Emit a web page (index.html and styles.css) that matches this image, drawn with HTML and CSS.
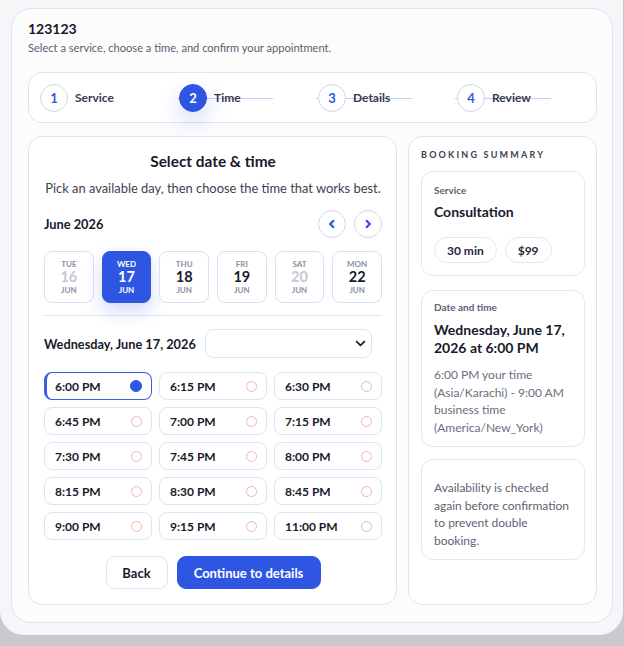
FILE: index.html
```html
<!DOCTYPE html>
<html lang="en">
<head>
<meta charset="utf-8">
<title>Booking</title>
<link rel="stylesheet" href="styles.css">
</head>
<body>
<div class="shell">
  <div class="card">
    <h1 class="title">123123</h1>
    <p class="subtitle">Select a service, choose a time, and confirm your appointment.</p>

    <div class="stepper">
      <div class="step"><span class="num">1</span><span class="label">Service</span></div>
      <div class="step line"><span class="num active">2</span><span class="label">Time</span></div>
      <div class="step line"><span class="num">3</span><span class="label">Details</span></div>
      <div class="step line"><span class="num">4</span><span class="label">Review</span></div>
    </div>

    <div class="panels">
      <section class="main">
        <h2 class="main-title">Select date &amp; time</h2>
        <p class="main-sub">Pick an available day, then choose the time that works best.</p>

        <div class="month-row">
          <span class="month">June 2026</span>
          <div class="navs">
            <button class="nav"><svg width="10" height="10" viewBox="0 0 10 10"><polyline points="6.2,2 3.2,5 6.2,8" fill="none" stroke="#2f56e3" stroke-width="2.4" stroke-linecap="round" stroke-linejoin="round"/></svg></button>
            <button class="nav"><svg width="10" height="10" viewBox="0 0 10 10"><polyline points="3.8,2 6.8,5 3.8,8" fill="none" stroke="#2f56e3" stroke-width="2.4" stroke-linecap="round" stroke-linejoin="round"/></svg></button>
          </div>
        </div>

        <div class="days">
          <div class="day off"><span class="dow">TUE</span><span class="dnum">16</span><span class="mon">JUN</span></div>
          <div class="day sel"><span class="dow">WED</span><span class="dnum">17</span><span class="mon">JUN</span></div>
          <div class="day"><span class="dow">THU</span><span class="dnum">18</span><span class="mon">JUN</span></div>
          <div class="day"><span class="dow">FRI</span><span class="dnum">19</span><span class="mon">JUN</span></div>
          <div class="day off"><span class="dow">SAT</span><span class="dnum">20</span><span class="mon">JUN</span></div>
          <div class="day"><span class="dow">MON</span><span class="dnum">22</span><span class="mon">JUN</span></div>
        </div>

        <div class="date-row">
          <span class="date-label">Wednesday, June 17, 2026</span>
          <div class="select"><svg width="11" height="11" viewBox="0 0 10 10"><polyline points="1.5,3.2 5,6.7 8.5,3.2" fill="none" stroke="#1c1f2e" stroke-width="1.6" stroke-linecap="round" stroke-linejoin="round"/></svg></div>
        </div>

        <div class="slots">
          <div class="slot sel"><span>6:00 PM</span><i class="radio"></i></div>
          <div class="slot"><span>6:15 PM</span><i class="radio"></i></div>
          <div class="slot"><span>6:30 PM</span><i class="radio"></i></div>
          <div class="slot"><span>6:45 PM</span><i class="radio"></i></div>
          <div class="slot"><span>7:00 PM</span><i class="radio"></i></div>
          <div class="slot"><span>7:15 PM</span><i class="radio"></i></div>
          <div class="slot"><span>7:30 PM</span><i class="radio"></i></div>
          <div class="slot"><span>7:45 PM</span><i class="radio"></i></div>
          <div class="slot"><span>8:00 PM</span><i class="radio"></i></div>
          <div class="slot"><span>8:15 PM</span><i class="radio"></i></div>
          <div class="slot"><span>8:30 PM</span><i class="radio"></i></div>
          <div class="slot"><span>8:45 PM</span><i class="radio"></i></div>
          <div class="slot"><span>9:00 PM</span><i class="radio"></i></div>
          <div class="slot"><span>9:15 PM</span><i class="radio"></i></div>
          <div class="slot"><span>11:00 PM</span><i class="radio"></i></div>
        </div>

        <div class="actions">
          <button class="btn back">Back</button>
          <button class="btn primary">Continue to details</button>
        </div>
      </section>

      <aside class="summary">
        <div class="sum-head">BOOKING SUMMARY</div>
        <div class="box">
          <div class="box-label">Service</div>
          <div class="box-value">Consultation</div>
          <div class="pills"><span class="pill">30 min</span><span class="pill">$99</span></div>
        </div>
        <div class="box when">
          <div class="box-label">Date and time</div>
          <div class="box-title">Wednesday, June 17, 2026 at 6:00 PM</div>
          <div class="box-text">6:00 PM your time (Asia/Karachi) - 9:00 AM business time (America/New_York)</div>
        </div>
        <div class="box note">
          <div class="box-text">Availability is checked again before confirmation to prevent double booking.</div>
        </div>
      </aside>
    </div>
  </div>
</div>
</body>
</html>
```

FILE: styles.css
```css
* { box-sizing: border-box; }
html, body { margin: 0; padding: 0; }
body {
  background: #c9cad0;
  font-family: "Lato", "Inter", sans-serif;
  color: #171a2b;
  width: 624px;
  height: 646px;
  overflow: hidden;
}
.shell {
  width: 623px;
  height: 635px;
  background: #f6f6f8;
  border-radius: 0 0 24px 24px;
  padding: 8px 10px 12px 11px;
}
.card {
  height: 100%;
  border: 1px solid #dfe3f6;
  border-radius: 20px;
  background: #fcfcfd;
  padding: 11px 15px 0 16px;
}
.title {
  margin: 0;
  font-size: 14px;
  line-height: 18px;
  font-weight: 700;
}
.subtitle {
  margin: 3px 0 0;
  font-size: 11.1px;
  line-height: 14px;
  color: #5a6072;
}
.stepper {
  margin-top: 17px;
  height: 51px;
  border: 1px solid #dfe3f6;
  border-radius: 14px;
  background: #fff;
  display: grid;
  grid-template-columns: repeat(4, 129px);
  column-gap: 10px;
  padding: 0 11px;
  align-items: center;
}
.step {
  position: relative;
  display: flex;
  align-items: center;
  gap: 7px;
}
.step.line::before {
  content: "";
  position: absolute;
  left: -2px;
  top: 50%;
  width: 96px;
  height: 1px;
  background: #c6cef1;
}
.num {
  position: relative;
  z-index: 1;
  width: 28px;
  height: 28px;
  border-radius: 50%;
  border: 1px solid #cdd5f4;
  background: #fff;
  color: #2f56e3;
  font-weight: 700;
  font-size: 13px;
  display: flex;
  align-items: center;
  justify-content: center;
}
.num.active {
  background: #2f56e3;
  border-color: #2f56e3;
  color: #fff;
  box-shadow: 0 10px 22px rgba(47, 86, 227, 0.22);
}
.label {
  position: relative;
  font-size: 12px;
  font-weight: 700;
  color: #363b50;
}
.panels {
  margin-top: 13px;
  display: flex;
  gap: 11px;
  align-items: flex-start;
}
.main {
  width: 369px;
  height: 469px;
  border: 1px solid #dfe3f6;
  border-radius: 14px;
  background: #fff;
  padding: 13px 14px 0 15px;
}
.main-title {
  margin: 0;
  text-align: center;
  font-size: 15.4px;
  line-height: 22px;
  font-weight: 700;
}
.main-sub {
  margin: 7px 0 0;
  text-align: center;
  font-size: 12.9px;
  line-height: 18px;
  color: #3c4152;
}
.month-row {
  margin-top: 13px;
  display: flex;
  align-items: center;
  justify-content: space-between;
}
.month { font-size: 12.8px; font-weight: 700; }
.navs { display: flex; gap: 8px; }
.nav {
  width: 28px;
  height: 28px;
  border-radius: 50%;
  border: 1px solid #cdd5f4;
  background: #fff;
  padding: 0;
  display: flex;
  align-items: center;
  justify-content: center;
}
.days {
  margin-top: 13px;
  display: grid;
  grid-template-columns: repeat(6, 1fr);
  gap: 8px;
  padding-bottom: 12px;
  border-bottom: 1px solid #e1e5f5;
}
.day {
  height: 52px;
  border: 1px solid #d9dff5;
  border-radius: 8px;
  display: flex;
  flex-direction: column;
  align-items: center;
  justify-content: center;
  background: #fff;
}
.dow, .mon {
  font-size: 8px;
  font-weight: 700;
  color: #8a90a6;
  line-height: 10px;
}
.dnum {
  font-size: 14.5px;
  font-weight: 700;
  line-height: 16px;
  color: #171a2b;
}
.day.off .dnum { color: #c4c8d4; }
.day.sel {
  background: #2f56e3;
  border-color: #2f56e3;
  box-shadow: 0 8px 18px rgba(47, 86, 227, 0.22);
}
.day.sel .dow, .day.sel .mon, .day.sel .dnum { color: #fff; }
.date-row {
  margin-top: 13px;
  display: flex;
  align-items: center;
  gap: 9px;
}
.date-label { font-size: 12.75px; font-weight: 700; }
.select {
  width: 167px;
  height: 29px;
  border: 1px solid #dfe3f6;
  border-radius: 8px;
  display: flex;
  align-items: center;
  justify-content: flex-end;
  padding-right: 5px;
}
.slots {
  margin-top: 14px;
  display: grid;
  grid-template-columns: repeat(3, 1fr);
  column-gap: 7px;
  row-gap: 7px;
}
.slot {
  height: 28px;
  border: 1px solid #dfe3f6;
  border-radius: 8px;
  display: flex;
  align-items: center;
  justify-content: space-between;
  padding: 0 9px 0 10px;
  font-size: 12px;
  font-weight: 700;
  color: #171a2b;
}
.radio {
  width: 11px;
  height: 11px;
  border-radius: 50%;
  border: 1px solid #f0b5b5;
}
.slot.sel {
  border-color: #3a5ee6;
  border-left: 3px solid #3a5ee6;
  padding-left: 8px;
}
.slot.sel .radio {
  width: 12px;
  height: 12px;
  background: #2f56e3;
  border-color: #2f56e3;
}
.actions {
  margin-top: 16px;
  display: flex;
  justify-content: center;
  gap: 9px;
}
.btn {
  height: 33px;
  border-radius: 9px;
  font-family: inherit;
  font-size: 13px;
  font-weight: 700;
}
.back {
  width: 62px;
  background: #fff;
  border: 1px solid #dfe3f6;
  color: #171a2b;
}
.primary {
  width: 144px;
  background: #2f56e3;
  border: 1px solid #2f56e3;
  color: #fff;
}
.summary {
  width: 189px;
  height: 469px;
  border: 1px solid #dfe3f6;
  border-radius: 14px;
  background: #fff;
  padding: 11px 11px 0 12px;
}
.sum-head {
  font-size: 9px;
  line-height: 14px;
  font-weight: 700;
  letter-spacing: 2.2px;
  color: #3a3f52;
}
.box {
  margin-top: 9px;
  border: 1px solid #e6e8f0;
  border-radius: 12px;
  padding: 11px 11px 12px 12px;
}
.box.when { margin-top: 14px; padding-top: 9px; padding-bottom: 10px; }
.box.note { margin-top: 12px; padding: 11px 11px 10px 12px; }
.box-label {
  font-size: 10px;
  line-height: 14px;
  font-weight: 700;
  color: #5b6175;
}
.box-value {
  margin-top: 6px;
  font-size: 14px;
  line-height: 18px;
  font-weight: 700;
}
.pills {
  margin-top: 16px;
  display: flex;
  gap: 8px;
}
.pill {
  height: 26px;
  border: 1px solid #e6e8f0;
  border-radius: 13px;
  padding: 0 12px;
  display: flex;
  align-items: center;
  font-size: 12px;
  font-weight: 700;
  color: #25293a;
}
.box-title {
  margin-top: 7px;
  font-size: 14px;
  line-height: 17.5px;
  font-weight: 700;
}
.box-text {
  margin-top: 10px;
  font-size: 12px;
  line-height: 17.5px;
  color: #6a6f80;
}
.note .box-text { margin-top: 8px; color: #5d6274; }
```
